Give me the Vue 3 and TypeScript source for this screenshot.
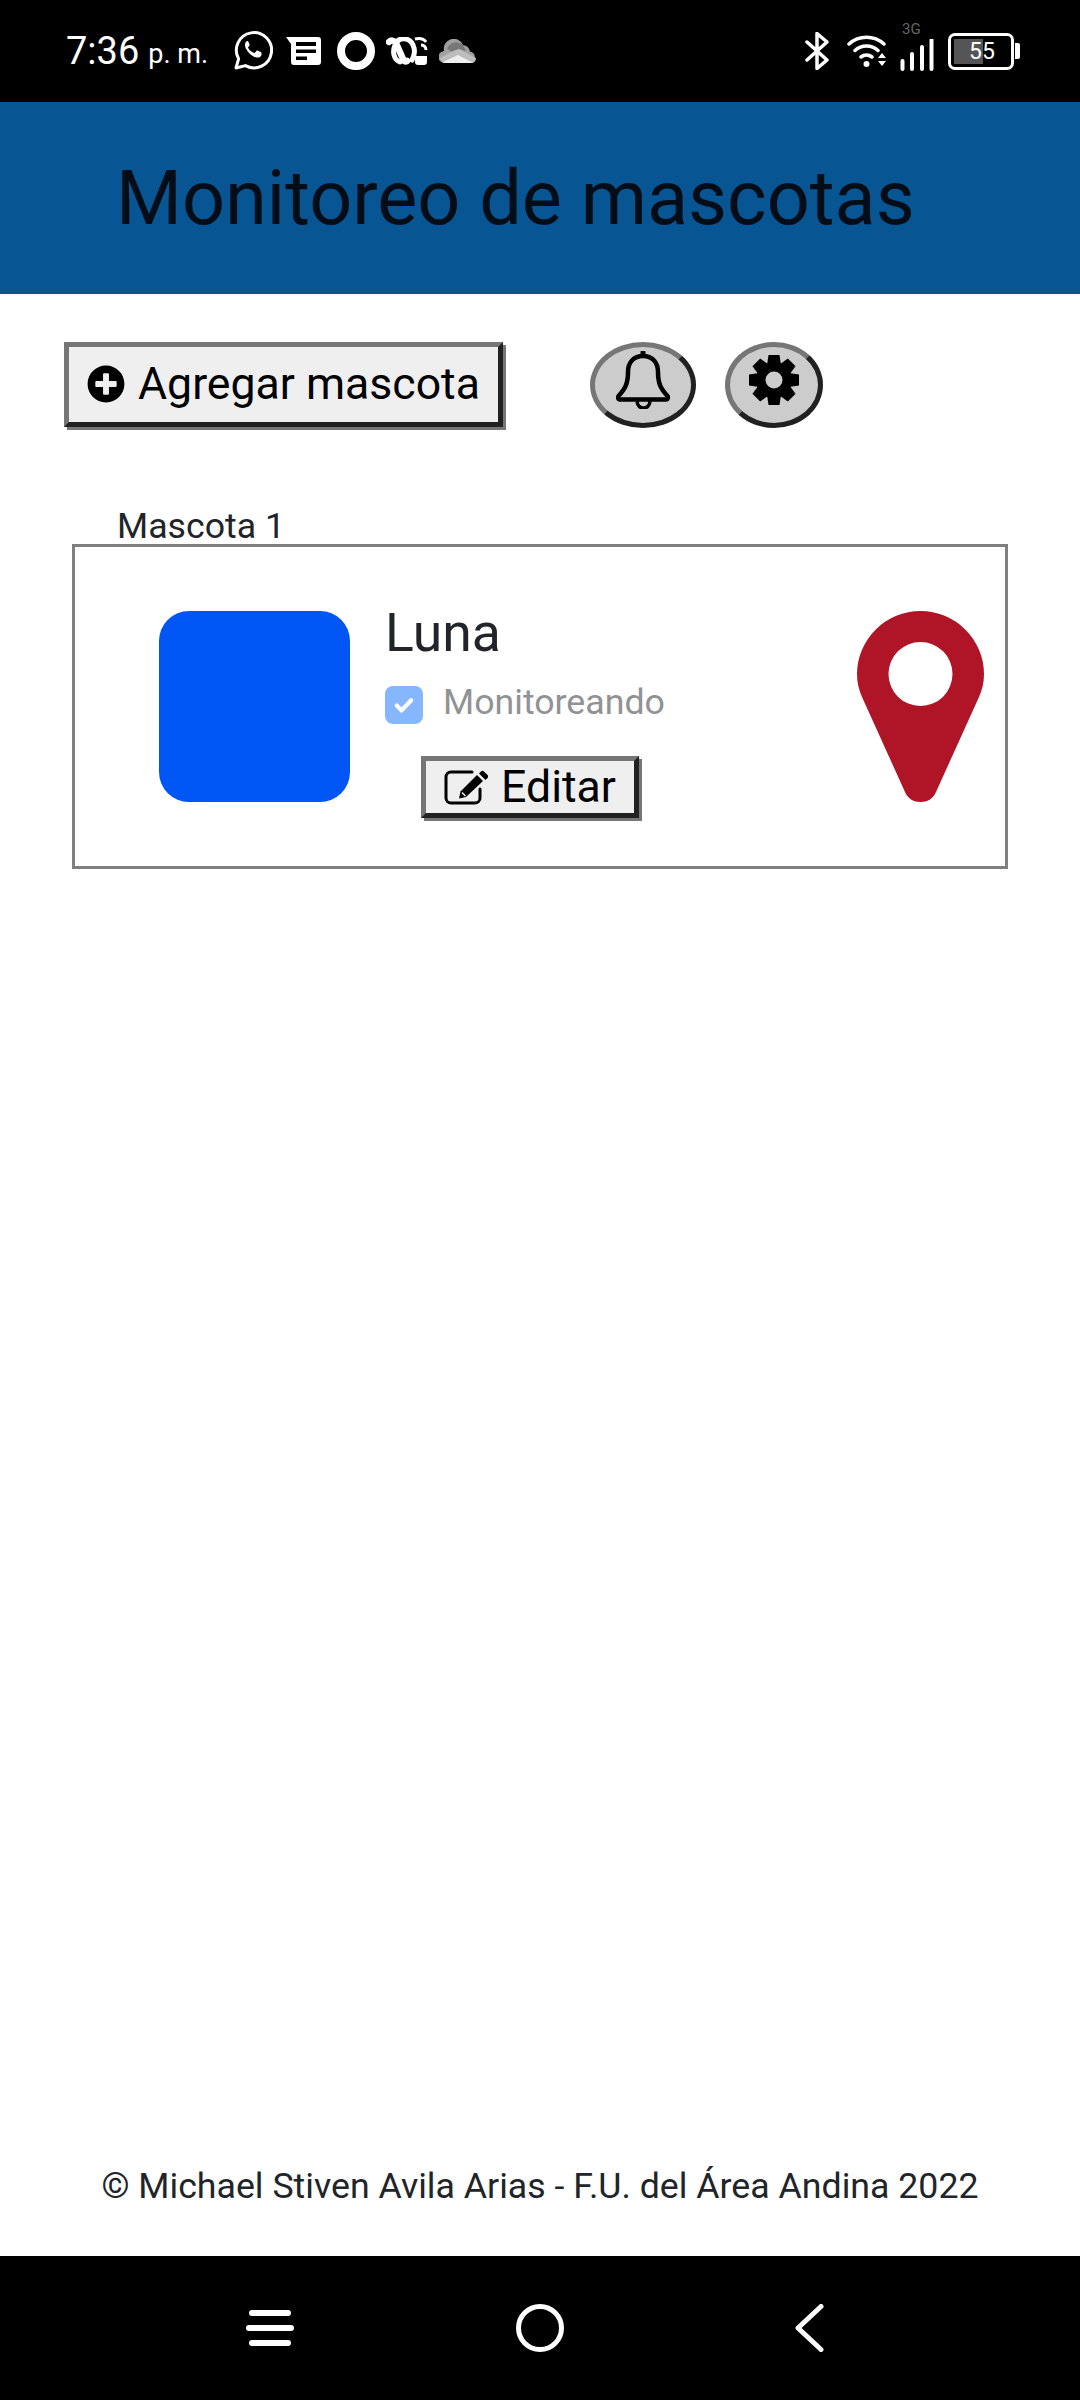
<script setup lang="ts">
const owner = 'Michael Stiven Avila Arias'
const pet = { label: 'Mascota 1', name: 'Luna', status: 'Monitoreando' }
const teeth = [0, 45, 90, 135, 180, 225, 270, 315]
</script>

<template>
  <div class="screen">
    <div class="status-bar">
      <div class="status-left">
        <span class="time">7:36</span>
        <span class="ampm">p. m.</span>
        <svg class="ic-whatsapp" viewBox="0 0 40 40" width="40" height="40">
          <path d="M3 37l2.600-9.200A17.600 17.600 0 1 1 12.400 34.600z" fill="none" stroke="#fff" stroke-width="3" stroke-linejoin="round" />
          <path d="M14.500 10.500c-1 0-3 1.600-3 4.600 0 3 2.200 6 2.700 6.700.5.700 4.400 6.800 10.500 8.500 4.200 1.200 6.700-1 7-3.300.2-1.200.2-2.200 0-2.400-.6-.6-4.200-2.300-4.800-2.500-.7-.2-1.100-.1-1.500.5-.5.700-1.400 2-1.900 2.200-.5.300-1 .2-2.400-.6-3.200-1.700-4.700-3.800-5.600-5.400-.4-.8 0-1.100.6-1.800.5-.6 1-1.200 1.100-1.800.1-.5-1.400-4-1.900-4.500-.3-.2-.5-.2-.8-.2z" fill="#fff" transform="translate(2.500 1.500) scale(.82)" />
        </svg>
        <svg class="ic-message" viewBox="0 0 35 28" width="35" height="28">
          <path d="M0 0h32a3 3 0 0 1 3 3v22a3 3 0 0 1-3 3H8a3 3 0 0 1-3-3V7z" fill="#fff" />
          <path d="M10 5h20v4H10zM10 12.500h20v3.500H10zM10 19.500h11v3.500H10z" fill="#000" />
        </svg>
        <svg class="ic-ring" viewBox="0 0 38 38" width="38" height="38">
          <circle cx="19" cy="19" r="15" fill="none" stroke="#fff" stroke-width="8" />
        </svg>
        <svg class="ic-app" viewBox="0 0 42 29" width="42" height="29">
          <path d="M3 5c2-2 5-2 7 1l7 16c1 2 2 3 4 2" fill="none" stroke="#fff" stroke-width="6.500" stroke-linecap="round" />
          <path d="M14 25c-6-2-8-10-5-17 2-5 6-7 11-6 5 1 7 5 8 9 1 3 0 9-2 12" fill="none" stroke="#fff" stroke-width="5" stroke-linecap="round" />
          <path d="M29 2c5-1 9 0 11 3M35 8c3 0 5 2 5 5" fill="none" stroke="#fff" stroke-width="3" />
          <path d="M29 19h12v6a3 3 0 0 1-3 3h-6a3 3 0 0 1-3-3z" fill="#fff" />
        </svg>
        <svg class="ic-cloud" viewBox="0 0 38 24" width="38" height="24">
          <path d="M6 24a6 6 0 0 1-1-12A10 10 0 0 1 24 6a8 8 0 0 1 7 6.500A6 6 0 0 1 32 24z" fill="#a0a0a0" />
          <path d="M8 9.500A10 10 0 0 1 24 6l3 6-7-2-7 3z" fill="#777" />
          <path d="M1 19l12-6.500 7-2.500 17 9c0 3-2 5-5 5H6c-2 0-4-2-5-5z" fill="#bdbdbd" />
          <path d="M4 23l15-7 15 7.800q-1 .2-2 .2H6q-1 0-2-1z" fill="#eee" />
        </svg>
      </div>
      <div class="status-right">
        <svg class="ic-bt" viewBox="0 0 25 38" width="25" height="38">
          <path d="M2 10l20 18-10 8.500V1.500L22 10 2 28" fill="none" stroke="#fff" stroke-width="3.500" stroke-linecap="round" stroke-linejoin="round" />
        </svg>
        <svg class="ic-wifi" viewBox="0 0 40 34" width="40" height="34">
          <path d="M2 10a26 26 0 0 1 35 0M8 16.500a17 17 0 0 1 23 0M14 23a9 9 0 0 1 11 0" fill="none" stroke="#fff" stroke-width="3.500" stroke-linecap="round" />
          <circle cx="19.500" cy="30" r="3" fill="#fff" />
          <path d="M31 24l4-5 4 5zM31 27l4 5 4-5z" fill="#fff" />
        </svg>
        <div class="signal">
          <span class="net">3G</span>
          <svg viewBox="0 0 34 32" width="34" height="32">
            <path d="M2.500 22v8M12 15v15M22 8v22M31.500 1v29" stroke="#fff" stroke-width="4" stroke-linecap="round" fill="none" />
          </svg>
        </div>
        <div class="battery">
          <div class="battery-body">
            <span class="battery-fill"></span>
            <span class="battery-num">55</span>
          </div>
          <span class="battery-nub"></span>
        </div>
      </div>
    </div>

    <header class="top">
      <h1>Monitoreo de mascotas</h1>
    </header>

    <main class="content">
      <div class="toolbar">
        <button class="btn btn-add">
          <svg viewBox="0 0 512 512" width="38" height="38">
            <path d="M256 8C119 8 8 119 8 256s111 248 248 248 248-111 248-248S393 8 256 8zm144 276c0 6.600-5.400 12-12 12h-92v92c0 6.600-5.400 12-12 12h-56c-6.600 0-12-5.400-12-12v-92h-92c-6.600 0-12-5.400-12-12v-56c0-6.600 5.400-12 12-12h92v-92c0-6.600 5.400-12 12-12h56c6.600 0 12 5.400 12 12v92h92c6.600 0 12 5.400 12 12v56z" />
          </svg>
          Agregar mascota
        </button>
        <button class="round round-bell">
          <svg viewBox="0 0 54 58" width="54" height="58">
            <path d="M21 49c0 5 2.500 8 6.500 8s6.500-3 6.500-8" fill="#ccc" stroke="#000" stroke-width="3.500" />
            <path d="M27 1v5" stroke="#000" stroke-width="5" stroke-linecap="round" />
            <path d="M27 5c-9 0-15 6-15 16 0 12-3 17-9.500 24-1 1-.5 3.500 1.500 3.500h46c2 0 2.500-2.500 1.500-3.500-6.500-7-9.500-12-9.500-24 0-10-6-16-15-16z" fill="#ccc" stroke="#000" stroke-width="4.500" stroke-linejoin="round" />
          </svg>
        </button>
        <button class="round round-gear">
          <svg viewBox="-25 -25 50 50" width="50" height="50">
            <path v-for="a in teeth" :key="a" d="M-7 -15L-5.500 -25H5.500L7 -15Z" :transform="`rotate(${a})`" />
            <circle r="18" />
            <circle r="8.500" fill="#ccc" />
          </svg>
        </button>
      </div>

      <section class="pet">
        <div class="pet-label">{{ pet.label }}</div>
        <div class="pet-card">
          <div class="photo"></div>
          <div class="info">
            <div class="name">{{ pet.name }}</div>
            <label class="check">
              <span class="box">
                <svg viewBox="0 0 20 20" width="24" height="24">
                  <path d="M4 10.500l4 4 8-8.500" fill="none" stroke="#fff" stroke-width="3.500" stroke-linecap="round" stroke-linejoin="round" />
                </svg>
              </span>
              <span class="check-text">{{ pet.status }}</span>
            </label>
            <button class="btn btn-edit">
              <svg viewBox="0 0 44 36" width="44" height="36">
                <path d="M28 3H7a5 5 0 0 0-5 5v21a5 5 0 0 0 5 5h24a5 5 0 0 0 5-5V20" fill="none" stroke="#000" stroke-width="3" stroke-linecap="round" />
                <path d="M33 6l6 6-17 16-7 1.500 1.500-7z" fill="#000" />
                <path d="M35 4.500l2-2a2 2 0 0 1 3 0l3.500 3.500a2 2 0 0 1 0 3l-2 2z" fill="#000" />
                <path d="M18 23.500l3.500 3.500" stroke="#efefef" stroke-width="1.500" />
              </svg>
              Editar
            </button>
          </div>
          <svg class="pin" viewBox="0 0 127 191" width="127" height="191">
            <path fill-rule="evenodd" d="M63.500 0A63.500 63.500 0 0 0 0 63c0 9 2 16 5 23l43 95c3 7 9 10 15.500 10s12.500-3 15.500-10l43-95c3-7 5-14 5-23A63.500 63.500 0 0 0 63.500 0zm0 31a32 32 0 1 1 0 64 32 32 0 0 1 0-64z" fill="#b01427" />
          </svg>
        </div>
      </section>

      <footer class="foot">© {{ owner }} - F.U. del Área Andina 2022</footer>
    </main>

    <nav class="nav-bar">
      <svg viewBox="0 0 48 36" width="48" height="36">
        <path d="M6 3h36M3 18h42M6 33h36" stroke="#fff" stroke-width="6" stroke-linecap="round" />
      </svg>
      <svg viewBox="0 0 48 48" width="48" height="48">
        <circle cx="24" cy="24" r="21.500" fill="none" stroke="#fff" stroke-width="5" />
      </svg>
      <svg viewBox="0 0 30 48" width="30" height="48">
        <path d="M26 2.500L3 24l23 21.500" fill="none" stroke="#fff" stroke-width="5" stroke-linecap="round" stroke-linejoin="round" />
      </svg>
    </nav>
  </div>
</template>

<style>
body {
  background: #fff;
}
</style>

<style scoped>
.screen {
  width: 1080px;
  height: 2400px;
  display: flex;
  flex-direction: column;
  font-family: Roboto, "Noto Sans", sans-serif;
  color: #212529;
  overflow: hidden;
}

.status-bar {
  height: 102px;
  background: #000;
  color: #fff;
  display: flex;
  justify-content: space-between;
  align-items: center;
  padding: 0 60px 0 66px;
  box-sizing: border-box;
}

.status-left,
.status-right {
  display: flex;
  align-items: center;
}

.time {
  font-size: 38px;
}

.ampm {
  font-size: 27px;
  margin: 6px 0 0 9px;
}

.ic-whatsapp { margin-left: 25px; }
.ic-message { margin-left: 13px; }
.ic-ring { margin-left: 16px; }
.ic-app { margin-left: 11px; }
.ic-cloud { margin-left: 11px; }

.ic-wifi { margin-left: 17px; }

.signal {
  position: relative;
  margin-left: 13px;
  padding-top: 8px;
  display: flex;
}

.net {
  position: absolute;
  top: -11px;
  left: 2px;
  font-size: 15px;
  color: #666;
}

.battery {
  display: flex;
  align-items: center;
  margin-left: 14px;
}

.battery-body {
  position: relative;
  width: 66px;
  height: 37px;
  border: 3px solid #fff;
  border-radius: 7px;
  box-sizing: border-box;
  display: flex;
  align-items: center;
  justify-content: center;
}

.battery-fill {
  position: absolute;
  left: 3px;
  top: 3px;
  bottom: 3px;
  width: 29px;
  background: #555;
}

.battery-num {
  position: relative;
  font-size: 23px;
  left: 1px;
}

.battery-nub {
  width: 5px;
  height: 16px;
  margin-left: 1px;
  background: #fff;
  border-radius: 0 2px 2px 0;
}

.top {
  height: 192px;
  background: #085594;
  display: flex;
  align-items: center;
  padding-left: 116px;
}

.top h1 {
  margin: 0;
  font-size: 75.6px;
  font-weight: 400;
  color: #020d18;
}

.content {
  flex: 1;
  display: flex;
  flex-direction: column;
}

.toolbar {
  display: flex;
  margin: 48px 0 0 64px;
}

.btn {
  display: flex;
  align-items: center;
  justify-content: center;
  background: #efefef;
  border: 5px solid;
  border-color: #767676 #212121 #212121 #767676;
  box-shadow: 3px 3px 0 #767676;
  color: #000;
  font-family: inherit;
  padding: 0;
  box-sizing: border-box;
}

.btn-add {
  width: 439px;
  height: 85px;
  gap: 13px;
  padding: 0 0 2px;
  font-size: 44.6px;
}

.round {
  height: 86px;
  padding: 0 0 10px;
  display: flex;
  align-items: center;
  justify-content: center;
  background: #ccc;
  border: 5px solid;
  border-color: #767676 #212121 #212121 #767676;
  border-radius: 50%;
  box-sizing: border-box;
}

.round-bell {
  width: 106px;
  margin-left: 87px;
}

.round-gear {
  width: 98px;
  margin-left: 29px;
}

.pet {
  margin: 0 72px;
}

.pet-label {
  margin: 74px 0 0 45px;
  height: 42px;
  font-size: 35.7px;
  line-height: 48px;
}

.pet-card {
  height: 325px;
  border: 3px solid #808080;
  box-sizing: border-box;
  padding: 55px 21px 0 84px;
  display: flex;
  align-items: flex-start;
}

.photo {
  width: 191px;
  height: 191px;
  margin-top: 9px;
  background: #0055f5;
  border-radius: 30px;
}

.info {
  margin-left: 35px;
  flex: 1;
}

.name {
  font-size: 53.5px;
  line-height: 62px;
}

.check {
  display: flex;
  align-items: center;
  gap: 20px;
  margin-top: 21px;
  height: 39px;
}

.box {
  width: 38px;
  height: 38px;
  border-radius: 8px;
  background: #86b7fe;
  display: flex;
  align-items: center;
  justify-content: center;
}

.check-text {
  font-size: 35.7px;
  color: #909294;
  margin-top: -6px;
}

.btn-edit {
  width: 218px;
  height: 62px;
  gap: 13px;
  margin: 32px 0 0 36px;
  font-size: 44.6px;
}

.pin {
  margin-top: 9px;
}

.foot {
  margin-top: auto;
  margin-bottom: 50px;
  text-align: center;
  font-size: 35.7px;
  line-height: 40px;
}

.nav-bar {
  height: 144px;
  background: #000;
  display: flex;
  align-items: center;
  padding-left: 246px;
  gap: 222px;
}

.nav-bar svg:last-child {
  margin-left: 9px;
}
</style>
